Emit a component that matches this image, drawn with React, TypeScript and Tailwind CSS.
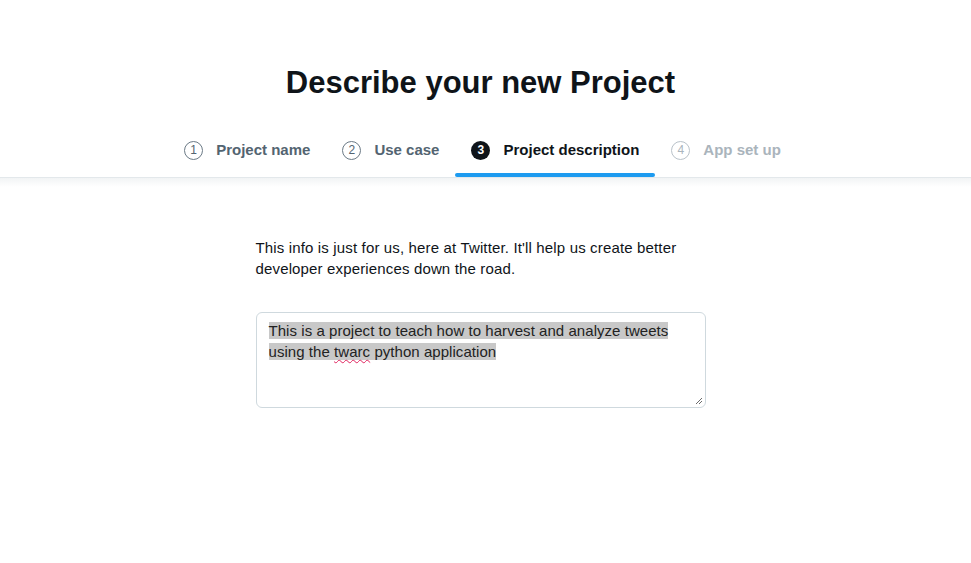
import React from "react"

type Step = {
  num: number
  label: string
  state: "done" | "active" | "todo"
}

const steps: Step[] = [
  { num: 1, label: "Project name", state: "done" },
  { num: 2, label: "Use case", state: "done" },
  { num: 3, label: "Project description", state: "active" },
  { num: 4, label: "App set up", state: "todo" },
]

const StepTab = ({ step }: { step: Step }) => {
  const active = step.state === "active"
  const todo = step.state === "todo"
  return (
    <div className="relative flex h-[52px] items-center gap-[13px] px-4 pb-[2px]">
      {/* circle */}
      <span
        className={
          active
            ? "flex h-[19px] w-[19px] items-center justify-center rounded-full bg-[#0f1419] text-[12px] font-bold text-white"
            : todo
              ? "flex h-[19px] w-[19px] items-center justify-center rounded-full border-[1.5px] border-[#b9c2c9] text-[12px] text-[#aab4bc]"
              : "flex h-[19px] w-[19px] items-center justify-center rounded-full border-[1.5px] border-[#6b7a86] text-[12px] text-[#536471]"
        }
      >
        {step.num}
      </span>
      <span
        className={
          active
            ? "text-[15px] font-bold text-[#0f1419]"
            : todo
              ? "text-[15px] font-bold text-[#aab4bc]"
              : "text-[15px] font-bold text-[#536471]"
        }
      >
        {step.label}
      </span>
      {active && (
        <span className="absolute bottom-0 left-0 right-0 h-[4px] rounded-full bg-[#1d9bf0]" />
      )}
    </div>
  )
}

export default function App() {
  return (
    <div
      className="min-h-[563px] bg-white pr-[10px]"
      style={{ fontFamily: '"Liberation Sans", Arial, sans-serif' }}
    >
      {/* HEADER */}
      <div className="relative bg-white pt-[64px]">
        <h1 className="text-center text-[31px] font-bold leading-[38px] text-[#0f1419]">
          Describe your new Project
        </h1>
        <div className="mt-[23px] flex justify-center pl-[4px]">
          {steps.map((s) => (
            <StepTab key={s.num} step={s} />
          ))}
        </div>
      </div>
      <div className="-mr-[10px] h-[10px] border-t border-[#e3e8eb] bg-gradient-to-b from-[#f2f4f5] to-white" />

      {/* CONTENT */}
      <div className="mx-auto mt-[50px] w-[450px]">
        <p className="text-[15px] leading-[21px] tracking-[0.15px] text-[#0f1419]">
          This info is just for us, here at Twitter. It'll help us create better
          developer experiences down the road.
        </p>

        <div className="relative mt-[33px] h-[96px] rounded-[6px] border border-[#cfd9de] px-3 pt-[7px] text-[15px] leading-[21px] tracking-[0.05px] text-[#222]">
          <span className="bg-[#c8c8c8]">
            This is a project to teach how to harvest and analyze tweets{" "}
          </span>
          <br />
          <span className="bg-[#c8c8c8]">
            using the{" "}
            <span className="underline decoration-[#e0245e] decoration-wavy decoration-1 underline-offset-2">
              twarc
            </span>{" "}
            python application
          </span>
          <svg
            className="absolute bottom-[2px] right-[2px]"
            width="9"
            height="9"
            viewBox="0 0 9 9"
          >
            <path d="M8 2 L2 8 M8 5 L5 8" stroke="#6b6b6b" strokeWidth="1" />
          </svg>
        </div>
      </div>
    </div>
  )
}
